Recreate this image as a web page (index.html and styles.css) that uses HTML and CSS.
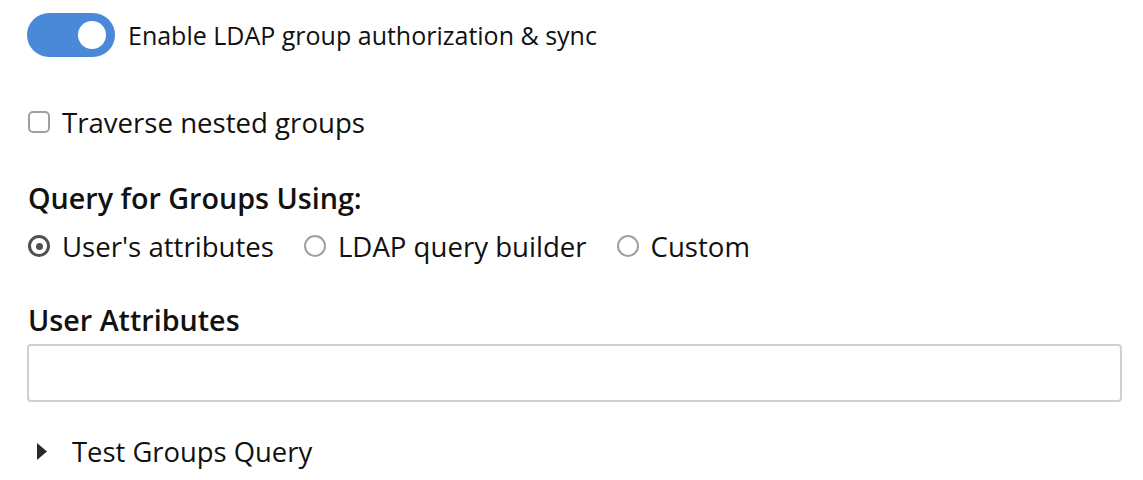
FILE: index.html
```html
<!DOCTYPE html>
<html>
<head>
<meta charset="utf-8">
<link rel="stylesheet" href="styles.css">
</head>
<body>
<div class="page">
  <div class="toggle-row">
    <span class="toggle"><span class="knob"></span></span>
    <span class="toggle-label">Enable LDAP group authorization &amp; sync</span>
  </div>
  <label class="check-row">
    <span class="checkbox"></span>
    <span>Traverse nested groups</span>
  </label>
  <div class="section">
    <div class="heading">Query for Groups Using:</div>
    <div class="radios">
      <label class="radio-item"><span class="radio checked"></span><span>User's attributes</span></label>
      <label class="radio-item"><span class="radio"></span><span>LDAP query builder</span></label>
      <label class="radio-item"><span class="radio"></span><span>Custom</span></label>
    </div>
  </div>
  <div class="section attrs">
    <div class="heading">User Attributes</div>
    <div class="input"></div>
  </div>
  <div class="disclosure">
    <svg class="caret" width="10" height="17" viewBox="0 0 10 17"><path d="M0 0 L10 8.5 L0 17 Z" fill="#2a2a2a"/></svg>
    <span>Test Groups Query</span>
  </div>
</div>
</body>
</html>
```
FILE: styles.css
```css
* { box-sizing: border-box; }
body {
  margin: 0;
  background: #fff;
  font-family: "Open Sans", "DejaVu Sans", sans-serif;
  color: #111;
}
.page {
  padding: 13px 21px 0 27px;
  display: flex;
  flex-direction: column;
}
.toggle-row {
  display: flex;
  align-items: center;
  gap: 13px;
  height: 44px;
}
.toggle {
  width: 88px;
  height: 44px;
  border-radius: 22px;
  background: #4a89d8;
  position: relative;
  flex: none;
}
.knob {
  position: absolute;
  right: 9px;
  top: 8px;
  width: 28px;
  height: 28px;
  border-radius: 50%;
  background: #fff;
}
.toggle-label {
  font-size: 25px;
}
.check-row {
  display: flex;
  align-items: center;
  gap: 12px;
  margin-top: 46px;
  font-size: 27.6px;
  padding-left: 1px;
}
.checkbox {
  width: 22px;
  height: 22px;
  border: 2px solid #a0a0a0;
  border-radius: 5px;
  flex: none;
}
.section {
  margin-top: 37px;
}
.heading {
  font-size: 28.7px;
  font-weight: 600;
  padding-left: 1px;
}
.radios {
  display: flex;
  align-items: center;
  gap: 30px;
  margin-top: 10px;
  font-size: 27.6px;
  padding-left: 1px;
}
.radio-item {
  display: flex;
  align-items: center;
  gap: 12px;
}
.radio {
  width: 22px;
  height: 22px;
  border-radius: 50%;
  border: 2px solid #a0a0a0;
  flex: none;
  position: relative;
}
.radio.checked {
  border: 3px solid #505050;
}
.radio.checked::after {
  content: "";
  position: absolute;
  left: 4.5px;
  top: 4.5px;
  width: 7px;
  height: 7px;
  border-radius: 50%;
  background: #505050;
}
.attrs {
  margin-top: 35px;
}
.input {
  margin-top: 5px;
  height: 58px;
  border: 2px solid #d0d0d0;
  border-radius: 4px;
}
.disclosure {
  display: flex;
  align-items: center;
  margin-top: 31px;
  font-size: 27.4px;
  padding-left: 10px;
  gap: 25px;
}
.caret { flex: none; }
```
